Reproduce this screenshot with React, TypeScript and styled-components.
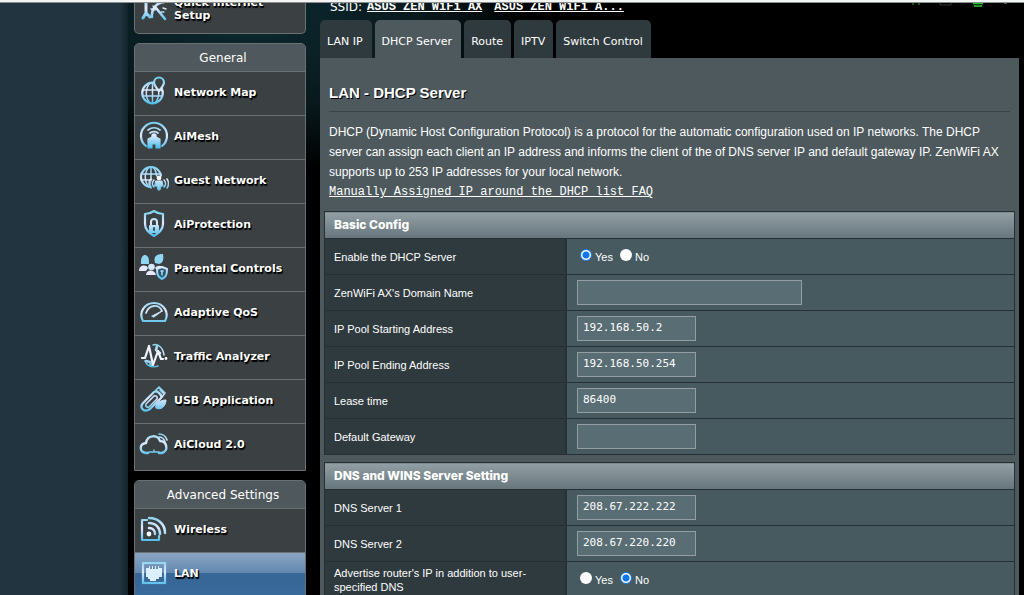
import React from "react";
import styled, { createGlobalStyle, css } from "styled-components";

const ui = `"DejaVu Sans", Verdana, sans-serif`;
const arial = `"Liberation Sans", Arial, sans-serif`;

const GlobalStyle = createGlobalStyle`
  * { box-sizing: border-box; }
  body { margin: 0; background: #21333e; color: #fff; font-family: ${arial}; }
  button, input { font: inherit; color: inherit; }
`;

const Page = styled.div`
  height: 100vh;
  overflow: hidden;
  display: flex;
  flex-direction: column;
  background: linear-gradient(90deg, #213440 0, #22343f 120px, #14232b 128px, #000 129px);
`;

const TopEdge = styled.div`
  flex: none;
  height: 3px;
  background: #f4f6f6;
  border-bottom: 1px solid #8b8e8f;
`;

const Shell = styled.div`
  flex: 1;
  min-height: 0;
  display: flex;
  gap: 14px;
  margin-left: 128px;
  padding: 0 5px 0 6px;
  background:
    radial-gradient(ellipse 290px 160px at 120px 10px, #0c2a31 0, #09191d 60%, transparent 100%),
    #000;
`;

const Sidebar = styled.nav`
  flex: none;
  width: 172px;
  display: flex;
  flex-direction: column;
  gap: 9px;
  font-family: ${ui};
`;

const Panel = styled.section`
  flex: none;
  padding-bottom: 3px;
  border: 1px solid #6b7072;
  border-radius: 5px 5px 0 0;
  overflow: hidden;
  background: #3b4042;
`;

const QuickPanel = styled(Panel)`
  height: 31px;
  padding-bottom: 0;
  display: flex;
  align-items: flex-end;
  border-top: 0;
  border-radius: 0 0 5px 5px;
`;

const PanelTitle = styled.h2`
  margin: 0;
  height: 27px;
  padding-left: 6px;
  line-height: 29px;
  text-align: center;
  font-size: 12px;
  font-weight: 400;
  background: #4f585c;
`;

const MenuItem = styled.a<{ $active?: boolean; $tall?: boolean }>`
  flex: 1;
  display: flex;
  align-items: center;
  gap: 5px;
  height: ${(p) => (p.$tall ? 46 : 44)}px;
  padding: 0 4px 2px 4px;
  border-top: ${(p) => (p.$tall ? 0 : 1)}px solid #6b7072;
  color: #fff;
  font-size: 11px;
  line-height: 13px;
  font-weight: 700;
  text-decoration: none;
  text-shadow: 1px 1px 0 #000, 1px 2px 1px #000;
  ${(p) =>
    p.$active &&
    css`
      height: 47px;
      margin-bottom: -3px;
      padding-bottom: 5px;
      background: linear-gradient(#8ba6c2 0, #6288b0 20px, #376696 20px, #386a9c 100%);
    `}
`;

const Icon = styled.svg`
  flex: none;
  width: 30px;
  height: 30px;
  margin-bottom: 3px;
  fill: none;
  stroke: url(#sky);
  stroke-width: 2;
  stroke-linecap: round;
  stroke-linejoin: round;
`;

const Main = styled.main`
  flex: 1;
  min-width: 0;
  display: flex;
  flex-direction: column;
`;

const SsidBar = styled.div`
  flex: none;
  display: flex;
  justify-content: space-between;
  align-items: flex-end;
  height: 11px;
  overflow: hidden;
  padding: 0 10px;
`;

const Ssids = styled.div`
  display: flex;
  gap: 12px;
  font: 12px/14px ${ui};
`;

const MonoLink = styled.a<{ $bold?: boolean }>`
  color: #fff;
  font-family: "Liberation Mono", monospace;
  font-size: 12px;
  font-weight: ${(p) => (p.$bold ? 700 : 400)};
  text-decoration: underline;
`;

const SsidLabel = styled.span`
  margin-right: -7px;
`;

const Status = styled.svg`
  align-self: flex-start;
  width: 110px;
  height: 8px;
`;

const Tabs = styled.div`
  flex: none;
  display: flex;
  gap: 3px;
  margin-top: 6px;
`;

const Tab = styled.button<{ $active?: boolean }>`
  height: 38px;
  padding: 5px 8px 0 7px;
  border: 0;
  border-radius: 5px 5px 0 0;
  background: ${(p) => (p.$active ? "#4d595d" : "#2f3a3e")};
  font-family: ${ui};
  font-size: 11px;
  white-space: nowrap;

  &:nth-child(-n + 2) {
    padding-right: 9px;
  }
`;

const Content = styled.div`
  flex: 1;
  min-height: 0;
  padding: 0 4px;
  background: #4d595d;
`;

const Intro = styled.header`
  padding: 26px 5px 0;
`;

const Title = styled.h1`
  margin: 0 0 10px;
  padding-bottom: 10px;
  border-bottom: 1px solid #3a4447;
  font-size: 15px;
  line-height: 17px;
  text-shadow: 1px 1px 0 #000;
`;

const Text = styled.p`
  margin: 0;
  max-width: 680px;
  font-size: 12px;
  line-height: 20px;
`;

const Faq = styled.div`
  line-height: 16px;
  margin-bottom: 11px;
`;

const Table = styled.table`
  width: 100%;
  margin-bottom: 7px;
  table-layout: fixed;
  border-collapse: collapse;
  font-size: 11px;
  th, td { border: 1px solid #262f33; text-align: left; }
  thead th {
    height: 27px;
    padding: 0 9px;
    background: linear-gradient(#92a0a5, #66757c);
    font-family: Inter, sans-serif;
    font-size: 12px;
    line-height: 14px;
    font-weight: 800;
  }
  tbody th {
    height: 36px;
    padding: 0 24px 0 9px;
    background: #2f3a3e;
    border-right: 2px solid #263236;
    font-weight: 400;
    line-height: 14px;
  }
  td { padding: 0 10px; background: #475a5f; }
`;

const LabelColumn = styled.col`
  width: 35%;
`;

const Field = styled.input<{ $wide?: boolean }>`
  display: block;
  width: ${(p) => (p.$wide ? 225 : 119)}px;
  height: 25px;
  padding: 0 5px 2px;
  border: 1px solid #929ea1;
  border-radius: 0;
  background: #596d74;
  font-family: "DejaVu Sans Mono", monospace;
  font-size: 11px;
`;

const Choices = styled.div`
  display: flex;
  gap: 4px;
`;

const Choice = styled.label`
  display: flex;
  align-items: center;
  gap: 3px;
  line-height: 14px;
`;

const Radio = styled.input`
  appearance: none;
  width: 12px;
  height: 12px;
  margin: 0 0 4px 3px;
  border-radius: 50%;
  background: #fff;

  &:checked {
    border: 1px solid #0b75f0;
    background: radial-gradient(circle, #0b75f0 3px, #fff 4px);
  }
`;

type IconName = "quick" | "map" | "mesh" | "guest" | "shield" | "family" | "gauge" | "pulse" | "usb" | "cloud" | "wireless" | "lan";

const drawings: Record<IconName, React.ReactNode> = {
  quick: (
    <>
      <path d="M4 5l4 3 3-3M7 8v12M4 25l3-5 4 4" strokeWidth="3" />
      <path d="M13 24C12 16 17 10 25 9M17 15l9 11" strokeWidth="2.6" />
      <path d="M14 13l3 3M12 16l4 1M20 7l-1 4M24 15l3 1M22 19h3" strokeWidth="1.4" />
    </>
  ),
  map: (
    <>
      <circle cx="13.5" cy="17" r="10.3" strokeWidth="2.2" />
      <path d="M4 14h19M4 20h19M13.500 7v20M11 7c-5 6-5 14 0 20M16 7c5 6 5 14 0 20" strokeWidth="1.5" />
      <path d="M20 15c-4-5-5-6-5-8.500a5 5 0 0 1 10 0c0 2.500-1 3.500-5 8.500z" fill="#3b4042" strokeWidth="2.2" />
      <circle cx="20" cy="6.500" r="1.300" fill="#3b4042" stroke="none" />
    </>
  ),
  mesh: (
    <>
      <path d="M7 26A13 13 0 1 1 23 26" strokeWidth="2.2" />
      <path d="M9 10c4-3 8-3 12 0M11 13c3-2 5-2 8 0" strokeWidth="1.7" />
      <circle cx="15" cy="16" r="1.7" fill="#fff" />
      <path d="M9 19l6-3 6 3v9h-4v-4h-4v4H9z" fill="url(#sky)" strokeWidth="1.2" />
    </>
  ),
  guest: (
    <>
      <circle cx="12" cy="13" r="10" />
      <path d="M2 10h20M2 16h20M12 3v20M10 3c-5 6-5 14 0 20M14 3c5 6 5 14 0 20" strokeWidth="1.5" />
      <circle cx="20" cy="20" r="8" fill="#3b4042" stroke="none" />
      <circle cx="20" cy="14" r="2.4" fill="#fff" stroke="none" />
      <path d="M17 17h6l1 5h-2l-1 4h-2l-1-4h-2z" fill="url(#sky)" strokeWidth="1" />
      <path d="M15 16c-2 2-2 5 0 7M12 15c-3 3-2 7 0 9M25 16c2 2 2 5 0 7M28 15c2 3 2 6 0 9" strokeWidth="1.6" />
    </>
  ),
  shield: (
    <>
      <path d="M15 3c3 2 5 3 9 3v10c0 6-4 9-9 12-5-3-9-6-9-12V6c4 0 6-1 9-3z" strokeWidth="2.2" />
      <path d="M12 18v-4a3 3 0 0 1 6 0v4" />
      <rect x="10" y="17" width="10" height="8" rx="1" fill="url(#sky)" stroke="none" />
      <path d="M15 20v2" stroke="#37545e" />
    </>
  ),
  family: (
    <>
      <g fill="url(#sky)" stroke="none">
        <path d="M2 12C1 0 10 1 10 9v3zM16 11c-2-7 2-9 8-9 1 6 0 9-4 10z" fill="#8fd6f2" />
        <path d="M0 19c0-6 7-7 9-3l-2 3zM16 16c2-3 7-3 9 0l-2 2h-5z" fill="#e4e9ff" />
        <circle cx="12.500" cy="15" r="3.300" />
        <path d="M7 23c0-6 9-6 10 0z" fill="#e4e9ff" />
      </g>
      <path d="M23 15l5 2c0 6-1 8-5 10-4-2-5-4-5-10z" fill="#2c5568" />
      <path d="M23 19v4M22 19h2" strokeWidth="1.6" />
    </>
  ),
  gauge: (
    <>
      <path d="M4 25c-5-9 2-18 11-18s16 9 11 18z" strokeWidth="2.2" />
      <path d="M7 17c3-9 13-9 16-2" strokeWidth="1.8" />
      <path d="M13 20l10-5-8 6z" fill="#fff" strokeWidth="1" />
    </>
  ),
  pulse: (
    <>
      <path d="M14 5c4-2 10 2 11 10M6 21c2 5 7 7 13 5" strokeWidth="1.5" />
      <path d="M18 6l-1 4 4 3M7 21l4 1 1 4" strokeWidth="2.6" />
      <path d="M3 18h3l4-12 4 19 5-14 3 8h2" stroke="#eef5ff" strokeWidth="2.2" />
      <circle cx="27" cy="18.500" r="1.400" fill="#fff" stroke="none" />
    </>
  ),
  usb: (
    <>
      <path d="M4 19L15 8c3-2 9 3 7 6L11 25c-6 4-11-1-7-6z" strokeWidth="2.2" />
      <path d="M7 20l8-8c2-1 4 1 3 3l-8 8c-2 1-4-1-3-3z" strokeWidth="1.600" />
      <path d="M17 6l3-3 6 6-3 4zM21 6l1 1M23 8l1 1" strokeWidth="1.7" />
      <path d="M17 24c-2-4 4-8 10-8 0 6-5 11-10 8z" fill="url(#sky)" strokeWidth="1" />
    </>
  ),
  cloud: (
    <>
      <path d="M9 25H7c-7-1-7-9 0-10 1-8 12-9 14-2 7 0 9 10 2 12h-3" strokeWidth="2.4" />
      <path d="M10 24h10M15 24v-2" strokeWidth="1.3" />
      <path d="M20 9c3 0 5 2 6 5M20 6c5 0 7 3 8 6" strokeWidth="1.6" />
    </>
  ),
  wireless: (
    <>
      <path d="M8 7H3v20h17v-4" strokeWidth="2.2" />
      <circle cx="10" cy="21" r="2.400" fill="#fff" stroke="none" />
      <path d="M10 15c4 0 6 3 6 6M10 10c7 0 11 5 11 11M10 5c10 0 16 7 16 15" strokeWidth="2.500" />
    </>
  ),
  lan: (
    <>
      <rect x="4" y="6" width="22" height="20" strokeLinejoin="miter" strokeWidth="2.200" />
      <path d="M7 11h3V9h1v3h2V9h1v3h2V9h1v3h2V9h1v2h3v9h-3v2h-3v2h-6v-2H9v-2H7z" fill="#dcefff" stroke="none" />
    </>
  ),
};

const MenuIcon = ({ name }: { name: IconName }) => (
  <Icon viewBox="0 0 30 30" aria-hidden="true">
    {drawings[name]}
  </Icon>
);

const general: [IconName, string][] = [
  ["map", "Network Map"],
  ["mesh", "AiMesh"],
  ["guest", "Guest Network"],
  ["shield", "AiProtection"],
  ["family", "Parental Controls"],
  ["gauge", "Adaptive QoS"],
  ["pulse", "Traffic Analyzer"],
  ["usb", "USB Application"],
  ["cloud", "AiCloud 2.0"],
];

const tabs = ["LAN IP", "DHCP Server", "Route", "IPTV", "Switch Control"];

const YesNo = ({ name, value }: { name: string; value: "Yes" | "No" }) => (
  <Choices role="radiogroup">
    {["Yes", "No"].map((option) => (
      <Choice key={option}>
        <Radio type="radio" name={name} defaultChecked={option === value} />
        {option}
      </Choice>
    ))}
  </Choices>
);

const TextRow = ({ id, label, value = "", wide }: { id: string; label: string; value?: string; wide?: boolean }) => (
  <tr>
    <th scope="row">
      <label htmlFor={id}>{label}</label>
    </th>
    <td>
      <Field id={id} type="text" defaultValue={value} $wide={wide} />
    </td>
  </tr>
);

const TableHead = ({ children }: { children: React.ReactNode }) => (
  <>
    <colgroup>
      <LabelColumn />
      <col />
    </colgroup>
    <thead>
      <tr>
        <th colSpan={2}>{children}</th>
      </tr>
    </thead>
  </>
);

export default function App() {
  return (
    <Page>
      <GlobalStyle />
      <TopEdge />
      <Shell>
        <Sidebar>
          <QuickPanel>
            <MenuItem href="#quick" $tall>
              <Icon viewBox="0 0 30 30" aria-hidden="true">
                <defs>
                  <linearGradient id="sky" gradientUnits="userSpaceOnUse" x1="0" y1="2" x2="0" y2="28">
                    <stop offset="0" stopColor="#74cdee" />
                    <stop offset="0.5" stopColor="#dfeaff" />
                    <stop offset="1" stopColor="#4dbdea" />
                  </linearGradient>
                </defs>
                {drawings.quick}
              </Icon>
              <span>Quick Internet Setup</span>
            </MenuItem>
          </QuickPanel>
          <Panel>
            <PanelTitle>General</PanelTitle>
            {general.map(([icon, label]) => (
              <MenuItem key={label} href={`#${icon}`}>
                <MenuIcon name={icon} />
                {label}
              </MenuItem>
            ))}
          </Panel>
          <Panel>
            <PanelTitle>Advanced Settings</PanelTitle>
            <MenuItem href="#wireless">
              <MenuIcon name="wireless" />
              Wireless
            </MenuItem>
            <MenuItem href="#lan" $active>
              <MenuIcon name="lan" />
              LAN
            </MenuItem>
          </Panel>
        </Sidebar>
        <Main>
          <SsidBar>
            <Ssids>
              <SsidLabel>SSID:</SsidLabel>
              <MonoLink href="#ssid1" $bold>ASUS ZEN WiFi AX</MonoLink>
              <MonoLink href="#ssid2" $bold>ASUS ZEN WiFi A...</MonoLink>
            </Ssids>
            <Status viewBox="0 0 110 8" aria-hidden="true">
              <path d="M14 0v2M20 0v2" stroke="#23b52c" strokeWidth="1" />
              <path d="M41 0v2h11V0" stroke="#333" fill="none" />
              <path d="M74 0.500h10M75 3h8" stroke="#25c92e" strokeWidth="1.600" />
              <path d="M105 0h3" stroke="#555" strokeWidth="2" />
            </Status>
          </SsidBar>
          <Tabs role="tablist">
            {tabs.map((tab) => (
              <Tab key={tab} role="tab" aria-selected={tab === "DHCP Server"} $active={tab === "DHCP Server"}>
                {tab}
              </Tab>
            ))}
          </Tabs>
          <Content>
            <Intro>
              <Title>LAN - DHCP Server</Title>
              <Text>
                DHCP (Dynamic Host Configuration Protocol) is a protocol for the automatic configuration used on IP
                networks. The DHCP server can assign each client an IP address and informs the client of the of DNS
                server IP and default gateway IP. ZenWiFi AX supports up to 253 IP addresses for your local network.
              </Text>
              <Faq>
                <MonoLink href="#faq">Manually Assigned IP around the DHCP list FAQ</MonoLink>
              </Faq>
            </Intro>
            <Table>
              <TableHead>Basic Config</TableHead>
              <tbody>
                <tr>
                  <th scope="row">Enable the DHCP Server</th>
                  <td>
                    <YesNo name="dhcp" value="Yes" />
                  </td>
                </tr>
                <TextRow id="domain" label="ZenWiFi AX's Domain Name" wide />
                <TextRow id="start" label="IP Pool Starting Address" value="192.168.50.2" />
                <TextRow id="end" label="IP Pool Ending Address" value="192.168.50.254" />
                <TextRow id="lease" label="Lease time" value="86400" />
                <TextRow id="gateway" label="Default Gateway" />
              </tbody>
            </Table>
            <Table>
              <TableHead>DNS and WINS Server Setting</TableHead>
              <tbody>
                <TextRow id="dns1" label="DNS Server 1" value="208.67.222.222" />
                <TextRow id="dns2" label="DNS Server 2" value="208.67.220.220" />
                <tr>
                  <th scope="row">Advertise router's IP in addition to user-specified DNS</th>
                  <td>
                    <YesNo name="advertise" value="No" />
                  </td>
                </tr>
              </tbody>
            </Table>
          </Content>
        </Main>
      </Shell>
    </Page>
  );
}
